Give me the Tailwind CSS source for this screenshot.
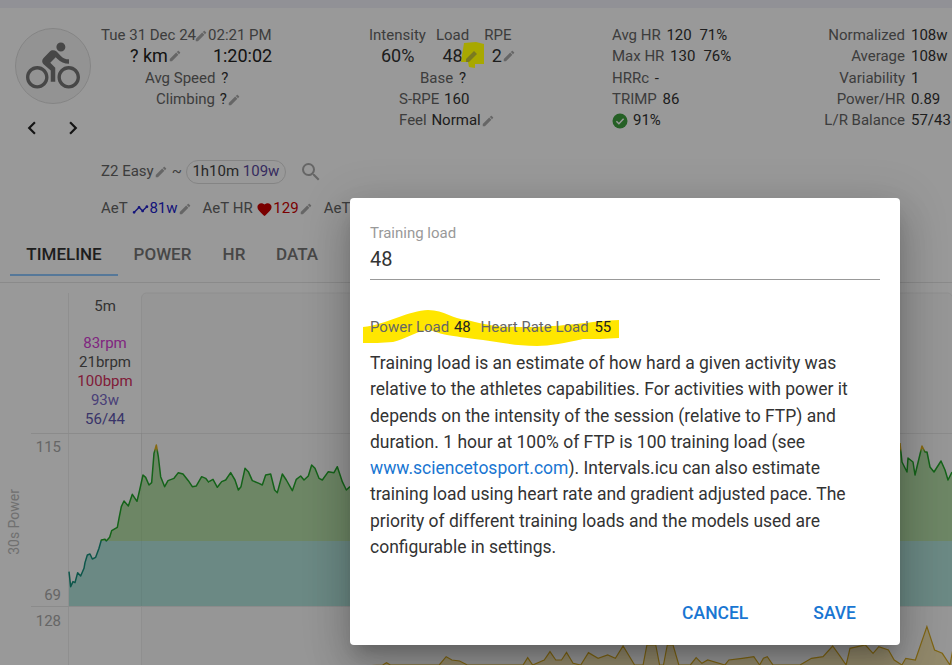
<!DOCTYPE html>
<html lang="en">
<head>
    <meta charset="UTF-8">
    <title>Training load</title>
    <script src="https://cdn.jsdelivr.net/npm/@tailwindcss/browser@4"></script>
</head>
<body class="font-['Roboto',sans-serif] overflow-hidden">
    <svg class="hidden">
        <symbol id="edit" viewBox="0 0 24 24"><path d="M3 17.25V21h3.75L17.81 9.94l-3.75-3.75L3 17.25zM20.71 7.04c.39-.39.39-1.02 0-1.41l-2.34-2.34c-.39-.39-1.02-.39-1.41 0l-1.83 1.83 3.75 3.75 1.83-1.83z"/></symbol>
    </svg>

    <div class="relative w-[952px] h-[665px] overflow-hidden bg-white">
        <div class="h-2 bg-[#f2f2fb]"></div>

        <!-- activity summary -->
        <div class="flex h-[275px] border-b border-[#e6e6e6] text-[15px] leading-[21.5px] text-[#666] relative">
            <div class="w-[101px] shrink-0 pl-[15px] pt-5">
                <div class="w-[76px] h-[76px] rounded-full border border-[#ddd] bg-[#f6f6f6] flex items-center justify-center">
                    <svg class="w-[54px] h-[54px] text-[#777]" viewBox="0 0 24 24" fill="currentColor"><path d="M15.5 5.5c1.1 0 2-.9 2-2s-.9-2-2-2-2 .9-2 2 .9 2 2 2zM5 12c-2.8 0-5 2.2-5 5s2.2 5 5 5 5-2.2 5-5-2.2-5-5-5zm0 8.5c-1.9 0-3.5-1.6-3.5-3.5s1.6-3.5 3.5-3.5 3.5 1.6 3.5 3.5-1.6 3.5-3.5 3.5zm5.8-10l2.4-2.4.8.8c1.3 1.3 3 2.1 5.1 2.1V9c-1.5 0-2.7-.6-3.6-1.5l-1.9-1.9c-.5-.4-1-.6-1.6-.6s-1.1.2-1.4.6L7.8 8.4c-.4.4-.6.9-.6 1.4 0 .6.2 1.1.6 1.4L11 14v5h2v-6.2l-2.2-2.3zM19 12c-2.8 0-5 2.2-5 5s2.2 5 5 5 5-2.2 5-5-2.2-5-5-5zm0 8.5c-1.9 0-3.5-1.6-3.5-3.5s1.6-3.5 3.5-3.5 3.5 1.6 3.5 3.5-1.6 3.5-3.5 3.5z"/></svg>
                </div>
                <div class="flex gap-[15px] pl-[4px] mt-[11px] text-[#222]">
                    <svg class="w-[26px] h-[26px]" viewBox="0 0 24 24" fill="currentColor"><path d="M15.41 7.41L14 6l-6 6 6 6 1.41-1.41L10.83 12z"/></svg>
                    <svg class="w-[26px] h-[26px]" viewBox="0 0 24 24" fill="currentColor"><path d="M10 6L8.59 7.41 13.17 12l-4.58 4.59L10 18l6-6z"/></svg>
                </div>
            </div>

            <div class="w-[268px] shrink-0 pt-[17px]">
                <div class="flex items-center h-[21px] whitespace-nowrap">Tue 31 Dec 24<svg class="w-[14px] h-[14px] fill-[#aaa] -ml-[2px]"><use href="#edit"/></svg>02:21 PM</div>
                <div class="flex items-center h-[20px] mb-[2px] text-[18px] text-[#222]">
                    <span class="ml-[29px]">? km</span><svg class="w-[14px] h-[14px] fill-[#aaa]"><use href="#edit"/></svg>
                    <span class="ml-[31px]">1:20:02</span>
                </div>
                <div class="pl-[44px] h-[21px]">Avg Speed <span class="text-[#333] ml-[2px]">?</span></div>
                <div class="flex items-center pl-[55px] h-[21px]">Climbing&nbsp;<span class="text-[#333] ml-[1px]">?</span><svg class="w-[14px] h-[14px] fill-[#aaa]"><use href="#edit"/></svg></div>

                <div class="flex items-center mt-[50px] h-6 whitespace-nowrap">
                    Z2 Easy<svg class="w-[14px] h-[14px] fill-[#aaa]"><use href="#edit"/></svg><span class="ml-[4px]">~</span>
                    <span class="ml-[4px] w-[100px] h-6 rounded-full border border-[#ddd] flex items-center justify-center text-[#444] shrink-0">1h10m&nbsp;<span class="text-[#5b4a9e]">109w</span></span>
                    <svg class="w-6 h-6 ml-[13px] fill-[#aaa] shrink-0" viewBox="0 0 24 24"><path d="M15.5 14h-.79l-.28-.27A6.47 6.47 0 0 0 16 9.5 6.5 6.5 0 1 0 9.5 16c1.61 0 3.09-.59 4.23-1.57l.27.28v.79l5 4.99L20.49 19l-4.99-5zm-6 0C7.01 14 5 11.99 5 9.5S7.01 5 9.5 5 14 7.01 14 9.5 11.99 14 9.5 14z"/></svg>
                </div>
                <div class="flex items-center mt-[13px] h-6 whitespace-nowrap">
                    AeT&nbsp;<svg class="w-[17px] h-[17px] fill-[#2222cc] shrink-0 ml-[1px]" viewBox="0 0 24 24"><path d="M23 8c0 1.1-.9 2-2 2-.18 0-.35-.02-.51-.07l-3.56 3.55c.05.16.07.34.07.52 0 1.1-.9 2-2 2s-2-.9-2-2c0-.18.02-.36.07-.52l-2.55-2.55c-.16.05-.34.07-.52.07s-.36-.02-.52-.07l-4.55 4.56c.05.16.07.33.07.51 0 1.1-.9 2-2 2s-2-.9-2-2 .9-2 2-2c.18 0 .35.02.51.07l4.56-4.55C8.02 9.36 8 9.18 8 9c0-1.1.9-2 2-2s2 .9 2 2c0 .18-.02.36-.07.52l2.55 2.55c.16-.05.34-.07.52-.07s.36.02.52.07l3.55-3.56C19.02 8.35 19 8.18 19 8c0-1.1.9-2 2-2s2 .9 2 2z"/></svg><span class="text-[#2222cc]">81w</span><svg class="w-[14px] h-[14px] fill-[#aaa] shrink-0"><use href="#edit"/></svg>
                    <span class="ml-[11px]">AeT HR</span>&nbsp;<svg class="w-[17px] h-[17px] fill-[#cc0000] shrink-0" viewBox="0 0 24 24"><path d="M12 21.35l-1.45-1.32C5.4 15.36 2 12.28 2 8.5 2 5.42 4.42 3 7.5 3c1.74 0 3.41.81 4.5 2.09C13.09 3.81 14.76 3 16.5 3 19.58 3 22 5.42 22 8.5c0 3.78-3.4 6.86-8.55 11.54L12 21.35z"/></svg><span class="text-[#cc0000]">129</span><svg class="w-[14px] h-[14px] fill-[#aaa] shrink-0"><use href="#edit"/></svg>
                    <span class="ml-[11px]">AeT</span>
                </div>
            </div>

            <div class="w-[243px] shrink-0 pt-[17px]">
                <div class="flex h-[21px]"><span>Intensity</span><span class="ml-[10px]">Load</span><span class="ml-[15px]">RPE</span></div>
                <div class="flex items-center h-[20px] mb-[2px] text-[18px] text-[#333]">
                    <span class="ml-[12px]">60%</span><span class="ml-[28px]">48</span><svg class="w-[14px] h-[14px] fill-[#aaa]"><use href="#edit"/></svg><span class="ml-[15px]">2</span><svg class="w-[14px] h-[14px] fill-[#aaa]"><use href="#edit"/></svg>
                </div>
                <div class="pl-[51px] h-[21px]">Base <span class="text-[#333] ml-[2px]">?</span></div>
                <div class="pl-[30px] h-[21px]">S-RPE <span class="text-[#333] ml-[1px]">160</span></div>
                <div class="flex items-center pl-[30px] h-[21px]">Feel&nbsp;<span class="text-[#333] ml-[1px]">Normal</span><svg class="w-[14px] h-[14px] fill-[#aaa]"><use href="#edit"/></svg></div>
            </div>

            <div class="w-[150px] shrink-0 pt-[17px] whitespace-nowrap">
                <div class="h-[21px]">Avg HR <span class="text-[#333] ml-[2px]">120</span> <span class="text-[#333] ml-[4px]">71%</span></div>
                <div class="h-[21px] mb-[1px] flex items-center">Max HR&nbsp;<span class="text-[#333] ml-[2px]">130</span><span class="text-[#333] ml-[8px]">76%</span></div>
                <div class="h-[21px]">HRRc <span class="text-[#333] ml-[2px]">-</span></div>
                <div class="h-[21px]">TRIMP <span class="text-[#333] ml-[2px]">86</span></div>
                <div class="flex items-center h-[21px] text-[#333]">
                    <svg class="w-4 h-4 mr-[5px]" viewBox="0 0 16 16"><circle cx="8" cy="8" r="7.5" fill="#3fa03f"/><path d="M4.4 8.2l2.5 2.5 4.7-4.9" fill="none" stroke="#fff" stroke-width="1.5"/></svg>91%
                </div>
            </div>

            <div class="grid grid-cols-[143px_auto] justify-start gap-x-[6px] w-[190px] shrink-0 pt-[17px] auto-rows-[21px] whitespace-nowrap">
                <span class="text-right">Normalized</span><span class="text-[#333]">108w</span>
                <span class="text-right">Average</span><span class="text-[#333]">108w</span>
                <span class="text-right mt-[1px]">Variability</span><span class="text-[#333] mt-[1px]">1</span>
                <span class="text-right mt-[1px]">Power/HR</span><span class="text-[#333] mt-[1px]">0.89</span>
                <span class="text-right mt-[1px]">L/R Balance</span><span class="text-[#333] mt-[1px]">57/43</span>
            </div>

            <!-- tabs -->
            <div class="absolute left-[10px] bottom-[6px] flex text-[17px] font-medium text-[#777] h-[46px] whitespace-nowrap">
                <span class="w-[108px] text-center leading-[48px] text-[#333] border-b-2 border-[#90c8ff]">TIMELINE</span>
                <span class="ml-[15px] w-[59px] text-center leading-[48px]">POWER</span>
                <span class="ml-[30px] w-[24px] text-center leading-[48px]">HR</span>
                <span class="ml-[30px] w-[42px] text-center leading-[48px]">DATA</span>
            </div>
        </div>

        <!-- chart canvas -->
        <div class="relative h-[382px] text-[15px]">
            <svg class="absolute inset-0" width="952" height="382" viewBox="0 283 952 382">
                <defs>
                    <linearGradient id="zoneFill" gradientUnits="userSpaceOnUse" x1="0" y1="433" x2="0" y2="606">
                        <stop offset="0.626" stop-color="#b6e0a8"/><stop offset="0.626" stop-color="#b2e4dc"/>
                    </linearGradient>
                    <linearGradient id="zoneFillCrop" gradientUnits="userSpaceOnUse" x1="0" y1="-21" x2="0" y2="498">
                        <stop offset="0.626" stop-color="#b6e0a8"/><stop offset="0.626" stop-color="#b2e4dc"/>
                    </linearGradient>
                    <linearGradient id="zoneLineCrop" gradientUnits="userSpaceOnUse" x1="0" y1="-21" x2="0" y2="498">
                        <stop offset="0.09" stop-color="#e0b020"/><stop offset="0.11" stop-color="#22a52a"/><stop offset="0.626" stop-color="#22a52a"/><stop offset="0.626" stop-color="#16907c"/>
                    </linearGradient>
                    <linearGradient id="zoneLine" gradientUnits="userSpaceOnUse" x1="0" y1="433" x2="0" y2="606">
                        <stop offset="0.09" stop-color="#e0b020"/><stop offset="0.11" stop-color="#22a52a"/><stop offset="0.626" stop-color="#22a52a"/><stop offset="0.626" stop-color="#16907c"/>
                    </linearGradient>
                </defs>
                <rect x="141.5" y="293" width="811" height="400" rx="5" fill="#fbfbfb" stroke="#eeeeee"/>
                <path d="M68.5 293V665" stroke="#eeeeee" fill="none"/>
                <path d="M31 433.5H952M31 606.5H952" stroke="#e8e8e8" fill="none"/>

                <!-- 30s power, traced left of the dialog -->
                <g transform="translate(69 440) scale(.3333)">
                    <path fill="url(#zoneFillCrop)" d="M0 498V395L5 440L12 425L18 428L26 398L35 408L45 385L48 368L55 345L63 342L70 357L80 352L90 325L97 300L108 298L112 303L122 292L128 272L145 262L150 235L157 200L165 183L178 198L190 163L200 178L204 184L212 150L222 105L230 112L240 135L248 128L255 40L262 15L268 50L275 110L287 140L297 122L315 115L328 98L342 102L358 122L370 140L382 138L398 110L410 115L420 128V498Z"/>
                    <path fill="none" stroke="url(#zoneLineCrop)" stroke-width="1.5" vector-effect="non-scaling-stroke" stroke-linejoin="round" d="M0 395L5 440L12 425L18 428L26 398L35 408L45 385L48 368L55 345L63 342L70 357L80 352L90 325L97 300L108 298L112 303L122 292L128 272L145 262L150 235L157 200L165 183L178 198L190 163L200 178L204 184L212 150L222 105L230 112L240 135L248 128L255 40L262 15L268 50L275 110L287 140L297 122L315 115L328 98L342 102L358 122L370 140L382 138L398 110L410 115L420 128"/>
                </g>
                <g transform="translate(209 440) scale(.3333)">
                    <path fill="url(#zoneFillCrop)" d="M0 498V125L12 118L25 142L38 125L50 120L65 98L78 120L88 150L96 140L108 85L118 95L130 122L150 130L160 135L170 105L185 102L197 150L205 158L220 102L232 120L250 152L262 118L275 108L285 120L298 108L308 75L318 85L330 115L340 120L358 95L375 98L385 80L400 125L412 150L423 140V498Z"/>
                    <path fill="none" stroke="url(#zoneLineCrop)" stroke-width="1.5" vector-effect="non-scaling-stroke" stroke-linejoin="round" d="M0 125L12 118L25 142L38 125L50 120L65 98L78 120L88 150L96 140L108 85L118 95L130 122L150 130L160 135L170 105L185 102L197 150L205 158L220 102L232 120L250 152L262 118L275 108L285 120L298 108L308 75L318 85L330 115L340 120L358 95L375 98L385 80L400 125L412 150L423 140"/>
                </g>
                <rect x="350" y="480" width="550" height="126" fill="url(#zoneFill)"/>
                <path fill="url(#zoneFill)" stroke="none" d="M895 606V443L900 443L902 462L907 472L908 458L913 462L915 475L922 446L925 452L927 452L930 467L934 472L941 461L945 470L948 480L952 472V606Z"/>
                <path fill="none" stroke="url(#zoneLine)" stroke-width="1.5" stroke-linejoin="round" d="M900 443L902 462L907 472L908 458L913 462L915 475L922 446L925 452L927 452L930 467L934 472L941 461L945 470L948 480L952 472"/>
                <path d="M141.5 433V606" stroke="#000" stroke-opacity=".04" fill="none"/>
                <g transform="translate(350 560) scale(.3846 .3333)">
                    <path fill="#f2dfa0" fill-opacity=".8" stroke="#d4a820" stroke-width="1.2" vector-effect="non-scaling-stroke" d="M0 320L85 315L95 308L105 315L232 315L250 290L265 300L285 303L305 315L450 315L462 293L475 315L505 300L520 275L535 300L550 300L563 277L580 310L600 315L620 278L645 295L670 285L690 295L710 258L740 315L762 315L772 255L795 255L805 315L815 315L825 255L840 255L855 315L885 315L900 293L915 310L930 300L975 315L985 300L1020 295L1050 290L1065 315L1075 295L1085 290L1100 315L1170 315L1200 295L1230 290L1255 258L1275 290L1290 315L1300 265L1340 255L1360 280L1375 260L1400 270L1415 300L1435 315L1445 295L1470 300L1500 200L1520 270L1540 280L1560 315L1568 265V320Z"/>
                </g>
            </svg>

            <div class="relative flex pt-[14px]">
                <div class="w-[69px]"></div>
                <div class="w-[72px] text-center leading-[19px]">
                    <div class="text-[#555] h-[37px]">5m</div>
                    <div class="text-[#d63fd6]">83rpm</div>
                    <div class="text-[#555]">21brpm</div>
                    <div class="text-[#d63060]">100bpm</div>
                    <div class="text-[#7a6ac8]">93w</div>
                    <div class="text-[#6058b0]">56/44</div>
                </div>
            </div>

            <span class="absolute right-[891px] top-[153px] text-[#aaa]">115</span>
            <span class="absolute right-[891px] top-[301px] text-[#aaa]">69</span>
            <span class="absolute right-[891px] top-[327px] text-[#aaa]">128</span>
            <span class="absolute left-[4px] top-[206px] text-[14px] text-[#bbb] [writing-mode:vertical-rl] rotate-180">30s Power</span>
        </div>

        <div class="absolute inset-0 bg-black/40"></div>

        <!-- marker highlight from the screenshot author -->
        <svg class="absolute left-[460px] top-[41px]" width="25" height="28" viewBox="0 0 25 28"><path d="M4 2L16 1L24 3L24 23L15 23L15 27L9 26L8 21L1 21Z" fill="#a8a800"/><path d="M6 21v-3l8-8 3 3-8 8z" fill="#7a7a20"/></svg>

        <!-- dialog -->
        <div class="absolute left-[350px] top-[198px] w-[550px] h-[447px] bg-white rounded-[4px] px-5 shadow-[0_11px_15px_-7px_rgba(0,0,0,0.2),0_24px_38px_3px_rgba(0,0,0,0.14),0_9px_46px_8px_rgba(0,0,0,0.12)]">
            <svg class="absolute left-0 top-0" width="550" height="160" viewBox="350 198 550 160"><path d="M363 327C385 325 410 310 428 310C445 310 452 319 467 320C490 326 500 327 517 327C560 328 590 321 619 320V338C605 339 595 339 583 339C565 343 550 346 537 346C515 346 500 342 483 340C465 338 455 336 447 335C437 333 432 330 427 330C415 332 405 339 393 342C382 343 372 343 363 343Z" fill="#ffe600"/></svg>
            <div class="relative">
                <div class="pt-[26px] text-[15px] leading-[18px] text-[#999]">Training load</div>
                <div class="text-[20px] leading-[30px] mt-[2px] h-[36px] text-[#333] border-b border-[#999] w-[510px]">48</div>
                <div class="mt-[37px] text-[15px] leading-[20px] text-[#666] whitespace-nowrap">Power Load <span class="text-[#222] ml-[1px]">48</span> <span class="ml-[6px]">Heart Rate Load</span> <span class="text-[#222] ml-[2px]">55</span></div>
                <p class="mt-[13px] text-[17.5px] leading-[26.3px] text-[#333] w-[510px]">Training load is an estimate of how hard a given activity was relative to the athletes capabilities. For activities with power it depends on the intensity of the session (relative to FTP) and duration. 1 hour at 100% of FTP is 100 training load (see <span class="text-[#1976d2]">www.sciencetosport.com</span>). Intervals.icu can also estimate training load using heart rate and gradient adjusted pace. The priority of different training loads and the models used are configurable in settings.</p>
            </div>
            <div class="absolute right-[44px] bottom-[20px] flex gap-[65px] text-[17.5px] leading-[24px] font-medium text-[#1976d2]">
                <span>CANCEL</span>
                <span>SAVE</span>
            </div>
        </div>
    </div>
</body>
</html>
